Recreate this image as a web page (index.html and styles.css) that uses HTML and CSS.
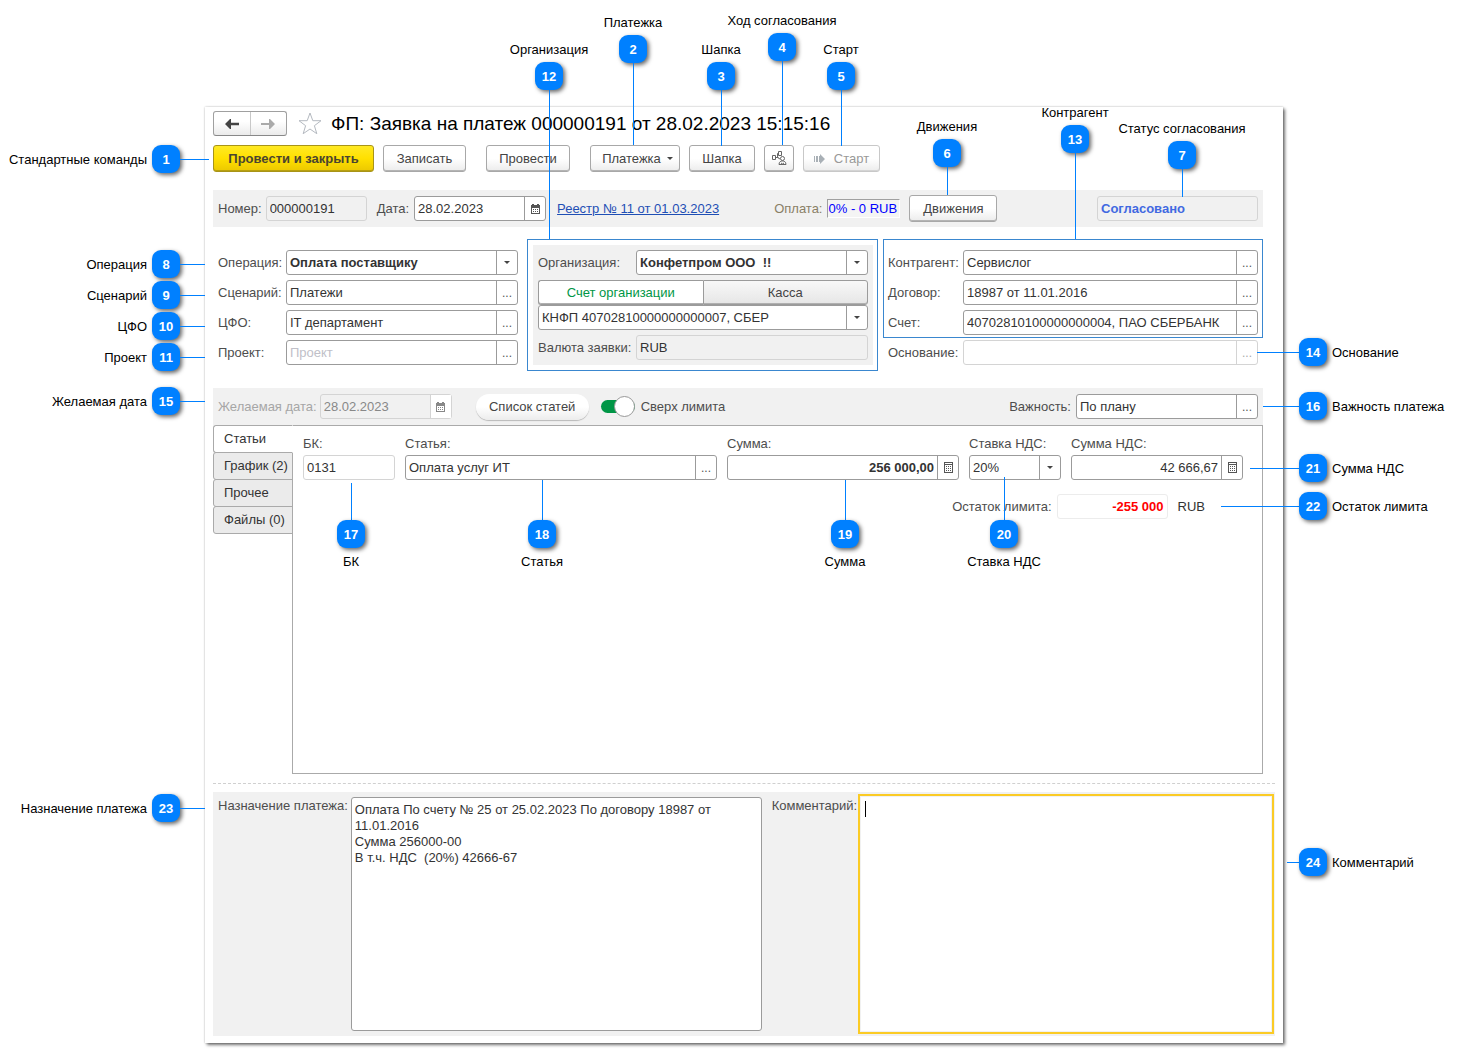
FILE: index.html
```html
<!DOCTYPE html>
<html lang="ru">
<head>
<meta charset="utf-8">
<title>ФП: Заявка на платеж</title>
<link rel="stylesheet" href="styles.css">
</head>
<body>
<svg width="0" height="0" class="defs" aria-hidden="true">
  <symbol id="calendar" viewBox="0 0 9 10">
    <path d="M0 1h9v9H0z M1 4v5h7V4z" fill="currentColor" fill-rule="evenodd"/>
    <path d="M1 0h2v2H1zM6 0h2v2H6zM2 5h1v1H2zM4 5h1v1H4zM6 5h1v1H6zM2 7h1v1H2zM4 7h1v1H4zM6 7h1v1H6z" fill="currentColor"/>
  </symbol>
  <symbol id="calc" viewBox="0 0 9 11">
    <path d="M0 0h9v11H0z M1 1v1h7V1z M1 3v7h7V3z" fill="currentColor" fill-rule="evenodd"/>
    <path d="M2 4h1v1H2zM4 4h1v1H4zM6 4h1v1H6zM2 6h1v1H2zM4 6h1v1H4zM6 6h1v1H6zM2 8h1v1H2zM4 8h1v1H4zM6 8h1v1H6z" fill="currentColor"/>
  </symbol>
</svg>
<div class="stage">
  <main class="window">
    <header class="titlebar">
      <div class="nav">
        <button type="button" aria-label="Назад"><svg width="14" height="10" viewBox="0 0 14 10"><path d="M0 5l5-5h1v3.7h8v2.6H6V10H5z" fill="#444"/></svg></button>
        <button type="button" aria-label="Вперед"><svg width="14" height="10" viewBox="0 0 14 10"><path d="M14 5L9 0H8v4H0v2h8v4h1z" fill="#aaa"/></svg></button>
      </div>
      <svg class="star" width="24" height="23" viewBox="0 0 24 23"><path d="M12 1l2.8 7.7H23l-6.6 5 2.4 8L12 17l-6.8 4.700 2.400-8L1 8.700h8.200z" fill="none" stroke="#b4b9c0"/></svg>
      <h1>ФП: Заявка на платеж 000000191 от 28.02.2023 15:15:16</h1>
    </header>

    <div class="commands">
      <button type="button" class="btn primary w-main">Провести и закрыть</button>
      <button type="button" class="btn w-save">Записать</button>
      <button type="button" class="btn w-post spaced">Провести</button>
      <button type="button" class="btn w-pay spaced">Платежка <i class="caret"></i></button>
      <button type="button" class="btn w-head">Шапка</button>
      <button type="button" class="btn w-icon" aria-label="Ход согласования"><svg width="16" height="15" viewBox="0 0 16 15" fill="none" stroke="#666"><path d="M1.500 4.500h3v4h-3zM7.500.5h3v4h-3zM4.500 6.500h3M6.500 6V2.500h1M6.500 6.500L9 8"/><circle cx="11.500" cy="7.500" r="2"/><path d="M8 13.500c0-3 2-3.500 3.500-3.500s3.500.5 3.500 3.500zM10 12l1.500 1 1.500-1"/></svg></button>
      <button type="button" class="btn w-start" disabled><svg width="11" height="10" viewBox="0 0 11 10"><path d="M0 2h1v6H0zM2 2h2v6H2zM5 2h1V0l5 5-5 5V8H5z" fill="#a9b0b6"/></svg>Старт</button>
    </div>

    <section class="bar">
      <label for="num">Номер:</label>
      <div class="field readonly w-num"><input id="num" value="000000191" readonly></div>
      <label for="date" class="gap-l">Дата:</label>
      <div class="field w-date"><input id="date" value="28.02.2023"><button type="button" aria-label="Календарь"><svg width="9" height="10"><use href="#calendar"/></svg></button></div>
      <a class="link" href="#registry">Реестр № 11 от 01.03.2023</a>
      <label for="paid" class="paid-label">Оплата:</label>
      <input id="paid" class="paid" value="0% - 0 RUB" readonly>
      <button type="button" class="btn w-moves">Движения</button>
      <div class="field readonly w-status"><input class="status" aria-label="Статус согласования" value="Согласовано" readonly></div>
    </section>

    <section class="details">
      <div class="rows main-rows">
        <label for="op">Операция:</label>
        <div class="field"><select id="op" class="bold"><option>Оплата поставщику</option></select><span class="drop"><i class="caret"></i></span></div>
        <label for="scen">Сценарий:</label>
        <div class="field"><input id="scen" value="Платежи"><button type="button" aria-label="Выбрать">...</button></div>
        <label for="cfo">ЦФО:</label>
        <div class="field"><input id="cfo" value="IT департамент"><button type="button" aria-label="Выбрать">...</button></div>
        <label for="proj">Проект:</label>
        <div class="field"><input id="proj" placeholder="Проект"><button type="button" aria-label="Выбрать">...</button></div>
      </div>
      <div class="org-frame">
        <div class="org">
          <label for="org">Организация:</label>
          <div class="field"><select id="org" class="bold"><option>Конфетпром ООО&nbsp; !!</option></select><span class="drop"><i class="caret"></i></span></div>
          <div class="wide account">
            <div class="toggle">
              <button type="button" class="on">Счет организации</button><button type="button">Касса</button>
            </div>
            <div class="field"><select aria-label="Счет организации"><option>КНФП 40702810000000000007, СБЕР</option></select><span class="drop"><i class="caret"></i></span></div>
          </div>
          <label for="cur">Валюта заявки:</label>
          <div class="field readonly"><input id="cur" value="RUB" readonly></div>
        </div>
      </div>
      <div class="partner">
        <div class="rows partner-rows framed">
          <label for="ctr">Контрагент:</label>
          <div class="field"><input id="ctr" value="Сервислог"><button type="button" aria-label="Выбрать">...</button></div>
          <label for="dog">Договор:</label>
          <div class="field"><input id="dog" value="18987 от 11.01.2016"><button type="button" aria-label="Выбрать">...</button></div>
          <label for="acc">Счет:</label>
          <div class="field"><input id="acc" value="40702810100000000004, ПАО СБЕРБАНК"><button type="button" aria-label="Выбрать">...</button></div>
        </div>
        <div class="rows partner-rows basis">
          <label for="base">Основание:</label>
          <div class="field light"><input id="base" disabled><button type="button" aria-label="Выбрать" disabled>...</button></div>
        </div>
      </div>
    </section>

    <section class="bar">
      <label for="wish" class="muted">Желаемая дата:</label>
      <div class="field readonly dim w-wish"><input id="wish" value="28.02.2023" disabled><button type="button" aria-label="Календарь" disabled><svg width="9" height="10"><use href="#calendar"/></svg></button></div>
      <button type="button" class="btn pill">Список статей</button>
      <label class="switch"><input type="checkbox" checked>Сверх лимита</label>
      <label for="prio" class="push">Важность:</label>
      <div class="field w-prio"><input id="prio" value="По плану"><button type="button" aria-label="Выбрать">...</button></div>
    </section>

    <section class="tabs">
      <div class="tablist" role="tablist">
        <button type="button" role="tab" aria-selected="true">Статьи</button>
        <button type="button" role="tab" aria-selected="false">График (2)</button>
        <button type="button" role="tab" aria-selected="false">Прочее</button>
        <button type="button" role="tab" aria-selected="false">Файлы (0)</button>
      </div>
      <div class="panel" role="tabpanel">
        <div class="items">
          <div class="cell"><label for="bk">БК:</label><div class="field light"><input id="bk" value="0131" readonly></div></div>
          <div class="cell"><label for="item">Статья:</label><div class="field"><input id="item" value="Оплата услуг ИТ"><button type="button" aria-label="Выбрать">...</button></div></div>
          <div class="cell"><label for="sum">Сумма:</label><div class="field"><input id="sum" class="bold num" value="256 000,00"><button type="button" aria-label="Калькулятор"><svg width="9" height="11"><use href="#calc"/></svg></button></div></div>
          <div class="cell"><label for="rate">Ставка НДС:</label><div class="field"><select id="rate"><option>20%</option></select><span class="drop"><i class="caret"></i></span></div></div>
          <div class="cell"><label for="vat">Сумма НДС:</label><div class="field"><input id="vat" class="num" value="42 666,67"><button type="button" aria-label="Калькулятор"><svg width="9" height="11"><use href="#calc"/></svg></button></div></div>
        </div>
        <div class="limit">
          <label for="lim">Остаток лимита:</label>
          <div class="field faint w-limit"><input id="lim" class="bold num red" value="-255 000" readonly></div>
          <span>RUB</span>
        </div>
      </div>
    </section>

    <hr>

    <section class="texts">
      <label for="purpose">Назначение платежа:</label>
      <textarea id="purpose">Оплата По счету № 25 от 25.02.2023 По договору 18987 от 11.01.2016
Сумма 256000-00
В т.ч. НДС  (20%) 42666-67</textarea>
      <label for="comment">Комментарий:</label>
      <div class="focus"><i class="cursor"></i><textarea id="comment"></textarea></div>
    </section>
  </main>

  <aside class="notes">
    <div class="note left n1"><span>Стандартные команды</span><b>1</b><i></i></div>
    <div class="note left n8"><span>Операция</span><b>8</b><i></i></div>
    <div class="note left n9"><span>Сценарий</span><b>9</b><i></i></div>
    <div class="note left n10"><span>ЦФО</span><b>10</b><i></i></div>
    <div class="note left n11"><span>Проект</span><b>11</b><i></i></div>
    <div class="note left n15"><span>Желаемая дата</span><b>15</b><i></i></div>
    <div class="note left n23"><span>Назначение платежа</span><b>23</b><i></i></div>

    <div class="note top n12"><span>Организация</span><b>12</b><i></i></div>
    <div class="note top n2"><span>Платежка</span><b>2</b><i></i></div>
    <div class="note top n3"><span>Шапка</span><b>3</b><i></i></div>
    <div class="note top n4"><span>Ход согласования</span><b>4</b><i></i></div>
    <div class="note top n5"><span>Старт</span><b>5</b><i></i></div>
    <div class="note top n6"><span>Движения</span><b>6</b><i></i></div>
    <div class="note top n13"><span>Контрагент</span><b>13</b><i></i></div>
    <div class="note top n7"><span>Статус согласования</span><b>7</b><i></i></div>

    <div class="note right n14"><i></i><b>14</b><span>Основание</span></div>
    <div class="note right n16"><i></i><b>16</b><span>Важность платежа</span></div>
    <div class="note right n21"><i></i><b>21</b><span>Сумма НДС</span></div>
    <div class="note right n22"><i></i><b>22</b><span>Остаток лимита</span></div>
    <div class="note right n24"><i></i><b>24</b><span>Комментарий</span></div>

    <div class="note bottom n17"><i></i><b>17</b><span>БК</span></div>
    <div class="note bottom n18"><i></i><b>18</b><span>Статья</span></div>
    <div class="note bottom n19"><i></i><b>19</b><span>Сумма</span></div>
    <div class="note bottom n20"><i></i><b>20</b><span>Ставка НДС</span></div>
  </aside>
</div>
</body>
</html>
```
FILE: styles.css
```css
* { box-sizing: border-box; }

body {
  margin: 0;
  background: #fff;
  color: #333;
  font: 13px/16px "Liberation Sans", Arial, sans-serif;
}

input, select, button, textarea {
  font: inherit;
  color: inherit;
  margin: 0;
}

.defs { position: absolute; }

.stage {
  position: relative;
  min-width: 1400px;
  padding: 107px 176px 9px 205px;
}

.window {
  padding: 4px 8px 7px;
  background: #fff;
  box-shadow: 2px 2px 3px rgba(0, 0, 0, .55), 0 0 2px rgba(0, 0, 0, .25);
}

/* Title */
.titlebar { display: flex; align-items: center; height: 25px; }

.nav {
  display: flex;
  width: 74px;
  height: 25px;
  border: 1px solid #a0a0a0;
  border-bottom-color: #888;
  border-radius: 3px;
  background: linear-gradient(#fff 40%, #ebebeb);
}
.nav button {
  flex: 1;
  display: grid;
  place-items: center;
  padding: 0;
  border: 0;
  background: none;
}
.nav button + button { border-left: 1px solid #c8c8c8; }
.star { margin: 0 9px 0 11px; }
h1 {
  margin: 0;
  color: #000;
  font-size: 19px;
  line-height: 24px;
  font-weight: normal;
  white-space: nowrap;
}

/* Buttons */
.btn {
  display: flex;
  align-items: center;
  justify-content: center;
  height: 27px;
  padding: 0;
  border: 1px solid #a8a8a8;
  border-radius: 3px;
  background: linear-gradient(#fff 50%, #ececec);
  box-shadow: inset 0 -1px #b4b4b4;
  color: #444;
  white-space: nowrap;
}
.btn:disabled { border-color: #c8c8c8; box-shadow: inset 0 -1px #d4d4d4; color: #999; }
.btn.primary {
  border-color: #a89418;
  background: linear-gradient(#ffe924, #ffe000 50%, #ecc800);
  box-shadow: inset 0 -1px #b8a010;
  color: #4a4430;
  font-weight: bold;
}
.commands { display: flex; gap: 9px; margin: 9px 0 18px; }
.spaced { margin-left: 11px; }
.w-main { width: 161px; }
.w-save { width: 83px; }
.w-post { width: 84px; }
.w-pay { width: 90px; gap: 6px; padding-left: 5px; }
.w-head { width: 66px; }
.w-icon { width: 30px; }
.w-start { width: 77px; gap: 9px; }
.w-moves { width: 88px; margin-left: 9px; }

.caret {
  width: 0;
  height: 0;
  border: 3px solid transparent;
  border-top-color: #444;
  border-bottom-width: 0;
}

/* Fields */
.field {
  display: flex;
  min-width: 0;
  height: 25px;
  border: 1px solid #9b9b9b;
  border-radius: 3px;
  background: #fff;
}
.field input, .field select {
  flex: 1;
  min-width: 0;
  width: 0;
  padding: 0 3px;
  border: 0;
  outline: 0;
  background: none;
  appearance: none;
}
.field button, .drop {
  display: grid;
  place-items: center;
  flex: none;
  width: 21px;
  padding: 0;
  border: 0;
  border-left: 1px solid #9b9b9b;
  background: none;
  color: #555;
  font-size: 12px;
}
.field input::placeholder { color: #c0c0c8; opacity: 1; }
.readonly { border-color: #d4d4d4; background: #f1f1f1; }
.light { border-color: #d4d4d4; }
.light button { border-color: #d4d4d4; color: #aaa; }
.faint { border-color: #ececec; }
.dim { color: #888; }
.dim button { border-color: #d4d4d4; background: #fff; color: #888; }
.field .bold { font-weight: bold; }
.field .num { text-align: right; }
.field .red { color: #f00; }
.field .status { color: #4169e1; font-weight: bold; }
label { color: #4d4d4d; white-space: nowrap; }
.muted { color: #a6a6a6; }

/* Grey bars */
.bar {
  display: flex;
  align-items: center;
  height: 37px;
  margin-right: 12px;
  padding: 0 5px;
  background: #f1f1f1;
}
.bar label { flex: none; }
.w-num { width: 101px; margin-left: 4px; }
.gap-l { margin-left: 10px; }
.w-date { width: 132px; margin: 0 11px 0 5px; }
.link { color: #1f4fb5; white-space: nowrap; }
.bar .paid-label { margin-left: 55px; color: #8a7f66; }
.paid {
  width: 73px;
  height: 19px;
  margin-left: 5px;
  padding: 0;
  border: 1px solid #fff;
  border-top-color: #a0a0a0;
  border-left-color: #a0a0a0;
  background: #f4f4f4;
  color: #00f;
}
.w-status { width: 161px; margin-left: auto; }
.w-wish { width: 132px; margin-left: 3px; }
.pill {
  width: 113px;
  height: 26px;
  margin-left: 24px;
  border: 0;
  border-radius: 13px;
  box-shadow: 0 1px 1px #b8b8b8;
}
.switch { display: flex; align-items: center; gap: 6px; margin-left: 12px; }
.switch input {
  display: flex;
  align-items: center;
  justify-content: flex-end;
  width: 34px;
  height: 13px;
  margin: 0;
  border-radius: 7px;
  background: #009646;
  appearance: none;
}
.switch input::before {
  content: "";
  width: 19px;
  height: 19px;
  flex: none;
  border: 1px solid #999;
  border-radius: 50%;
  background: #fff;
}
.push { margin-left: auto; }
.w-prio { width: 182px; margin-left: 5px; }

/* Details */
.details {
  display: flex;
  align-items: flex-start;
  margin: 12px 12px 17px 0;
}
.rows { display: grid; gap: 5px 0; align-items: center; }
.main-rows {
  flex: none;
  margin: 11px 9px 0 5px;
  grid-template-columns: 68px 232px;
}
.org-frame { flex: none; width: 351px; padding: 5px 4px 5px 5px; border: 1px solid #3a87cf; }
.org {
  display: grid;
  grid-template-columns: 98px 232px;
  gap: 5px 0;
  align-items: center;
  padding: 5px;
  background: #f1f1f1;
}
.wide { grid-column: 1 / -1; }
.toggle { display: flex; }
.toggle button {
  flex: 1;
  height: 25px;
  padding: 0;
  border: 1px solid #9b9b9b;
  border-radius: 0 3px 3px 0;
  background: linear-gradient(#f8f8f8, #e6e6e6);
  box-shadow: inset 0 -1px #b0b0b0;
  color: #444;
}
.toggle .on {
  border-right: 0;
  border-radius: 3px 0 0 3px;
  background: #fff;
  color: #009646;
}
.partner { flex: 1; margin-left: 5px; }
.partner-rows { grid-template-columns: 75px 1fr; padding: 0 5px; }
.framed { padding: 10px 4px 2px; border: 1px solid #3a87cf; }
.basis { margin-top: 2px; }

/* Tabs */
.tabs { display: flex; margin-right: 12px; min-height: 349px; }
.tablist { display: flex; flex-direction: column; width: 80px; margin-right: -1px; }
.tablist button {
  height: 28px;
  margin-bottom: -1px;
  padding: 0 0 0 10px;
  border: 1px solid #aaa;
  border-radius: 3px 0 0 3px;
  background: #ebebeb;
  text-align: left;
  white-space: nowrap;
}
.tablist [aria-selected="true"] { border-right-color: #fff; background: #fff; z-index: 1; }
.panel { flex: 1; padding: 10px 19px 0 10px; border: 1px solid #aaa; }
.items {
  display: grid;
  grid-template-columns: 92px 1fr 232px 92px 172px;
  gap: 10px;
}
.cell { display: grid; gap: 3px; min-width: 0; }
.limit { display: flex; align-items: center; justify-content: flex-end; margin: 14px 38px 0 0; }
.w-limit { width: 111px; margin: 0 10px 0 5px; }

hr { margin: 9px 0 8px; border: 0; border-top: 1px dashed #d0d0d0; }

/* Text areas */
.texts {
  display: flex;
  align-items: flex-start;
  padding: 2px 1px 2px 5px;
  background: #f1f1f1;
}
.texts label { flex: none; margin-top: 4px; }
textarea {
  display: block;
  padding: 4px 3px;
  border: 1px solid #9b9b9b;
  border-radius: 3px;
  background: #fff;
  outline: 0;
  resize: none;
}
#purpose { flex: 1; height: 234px; margin: 3px 10px 3px 3px; }
.focus { position: relative; flex: 1 1 13px; margin-left: 1px; border: 2px solid #fbcb25; }
#comment { width: 100%; height: 236px; border: 1px solid #f1f1f1; border-radius: 0; }
.cursor { position: absolute; left: 5px; top: 5px; width: 1px; height: 16px; background: #000; }

/* Numbered callouts laid over the form */
.notes { color: #000; }
.note { position: absolute; display: flex; align-items: center; pointer-events: none; white-space: nowrap; }
.note span { padding-top: 2px; }
.note b {
  flex: none;
  width: 28px;
  height: 28px;
  border-radius: 9px;
  background: #0080ff;
  box-shadow: 2px 2px 4px rgba(0, 0, 0, .6);
  color: #fff;
  line-height: 29px;
  text-align: center;
}
.note i { flex: none; background: #0080ff; }
.left { left: 0; }
.left span { width: 147px; margin-right: 5px; text-align: right; }
.left i { width: var(--line, 25px); height: 1px; }
.right { right: 0; }
.right i { width: var(--line); height: 1px; }
.right span { width: 127px; margin-left: 5px; }
.top, .bottom { flex-direction: column; width: 140px; }
.top i, .bottom i { width: 1px; height: var(--line); margin-left: 1px; }
.top span { padding-top: 1px; margin-bottom: 4px; }
.bottom span { margin-top: 4px; }

.n1 { top: 145px; --line: 29px; }
.n8 { top: 250px; }
.n9 { top: 281px; }
.n10 { top: 312px; }
.n11 { top: 343px; }
.n15 { top: 387px; }
.n23 { top: 794px; }

.n12 { left: 479px; top: 41px; --line: 149px; }
.n2 { left: 563px; top: 14px; --line: 82px; }
.n3 { left: 651px; top: 41px; --line: 56px; }
.n4 { left: 712px; top: 12px; --line: 84px; }
.n5 { left: 771px; top: 41px; --line: 56px; }
.n6 { left: 877px; top: 118px; --line: 28px; }
.n13 { right: 314px; top: 104px; --line: 86px; }
.n7 { right: 207px; top: 120px; --line: 28px; }

.n14 { top: 338px; --line: 42px; }
.n16 { top: 392px; --line: 36px; }
.n21 { top: 454px; --line: 49px; }
.n22 { top: 492px; --line: 78px; }
.n24 { top: 848px; --line: 12px; }

.n17 { left: 281px; top: 483px; --line: 37px; }
.n18 { left: 472px; top: 480px; --line: 40px; }
.n19 { right: 544px; top: 480px; --line: 40px; }
.n20 { right: 385px; top: 477px; --line: 43px; }
```
